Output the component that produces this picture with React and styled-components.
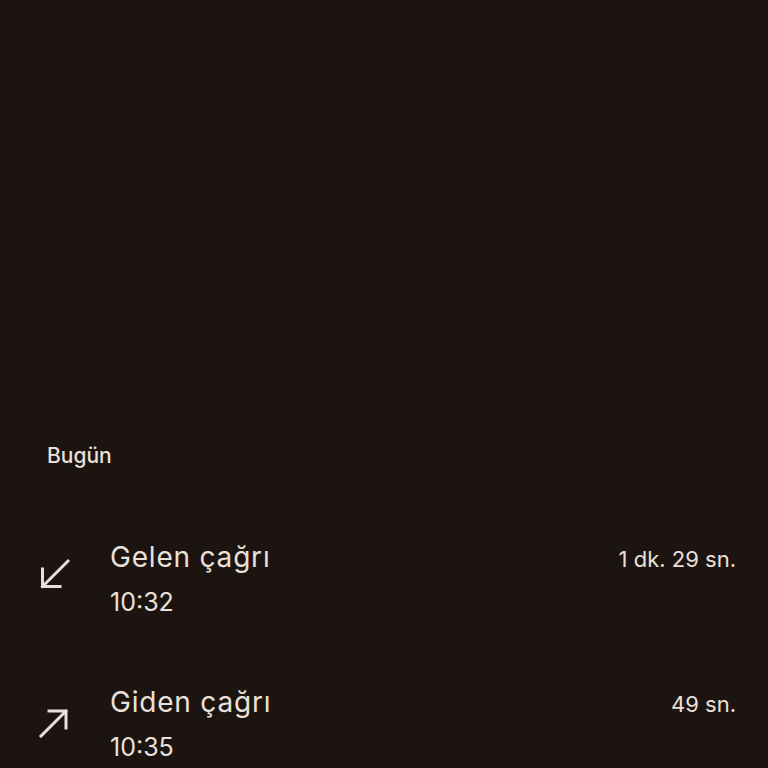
import React from "react";
import styled, { createGlobalStyle } from "styled-components";

const GlobalStyle = createGlobalStyle`
  html, body {
    margin: 0;
    padding: 0;
    background: #1b1411;
  }
  body {
    font-family: Inter, Roboto, "Noto Sans", sans-serif;
    color: #ebe0d9;
  }
`;

const Screen = styled.div`
  width: 768px;
  height: 768px;
  overflow: hidden;
  background: #1b1411;
  padding-top: 442px;
  box-sizing: border-box;
`;

const SectionTitle = styled.div`
  padding-left: 47px;
  font-size: 21px;
  line-height: 28px;
  font-weight: 500;
  margin-bottom: 69px;
`;

const CallRow = styled.div`
  display: flex;
  align-items: flex-start;
  height: 145px;
  padding: 0 32px 0 34px;
`;

const IconBox = styled.div`
  width: 40px;
  height: 40px;
  margin-top: 14px;
  flex-shrink: 0;
`;

const Info = styled.div`
  flex: 1;
  margin-left: 36px;
  display: flex;
  flex-direction: column;
`;

const Title = styled.div`
  font-size: 28px;
  line-height: 36px;
  letter-spacing: 0.8px;
`;

const Time = styled.div`
  font-size: 25px;
  line-height: 32px;
  margin-top: 11px;
`;

const Duration = styled.div`
  font-size: 22px;
  line-height: 36px;
  padding-top: 2px;
`;

const Arrow = ({ dir }) => (
  <svg width="40" height="40" viewBox="0 0 40 40" fill="none">
    {dir === "in" ? (
      <path
        d="M34 8 L8.5 33.5 M8.5 16 V33.5 H26"
        stroke="#ebe0d9"
        strokeWidth="3"
        strokeLinecap="square"
      />
    ) : (
      <path
        d="M7 38 L32 13 M15 13 H32 V30"
        stroke="#ebe0d9"
        strokeWidth="3"
        strokeLinecap="square"
      />
    )}
  </svg>
);

const calls = [
  { dir: "in", title: "Gelen çağrı", time: "10:32", duration: "1 dk. 29 sn." },
  { dir: "out", title: "Giden çağrı", time: "10:35", duration: "49 sn." },
];

export default function App() {
  return (
    <>
      <GlobalStyle />
      <Screen>
        <SectionTitle>Bugün</SectionTitle>
        {calls.map((c) => (
          <CallRow key={c.time}>
            <IconBox>
              <Arrow dir={c.dir} />
            </IconBox>
            <Info>
              <Title>{c.title}</Title>
              <Time>{c.time}</Time>
            </Info>
            <Duration>{c.duration}</Duration>
          </CallRow>
        ))}
      </Screen>
    </>
  );
}
